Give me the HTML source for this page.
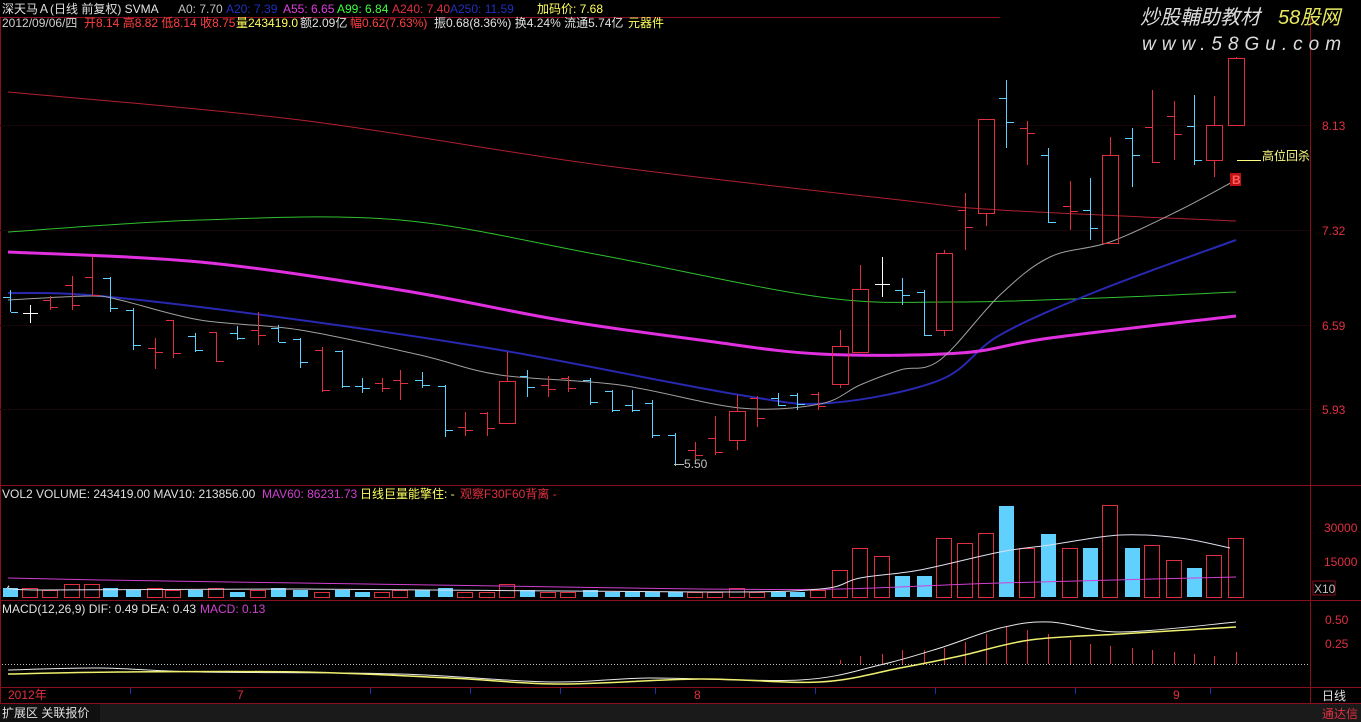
<!DOCTYPE html>
<html><head><meta charset="utf-8">
<style>
html,body{margin:0;padding:0;background:#000;width:1361px;height:722px;overflow:hidden}
svg{display:block}
text{font-family:"Liberation Sans","Noto Sans CJK SC",sans-serif;font-size:12px}
</style></head><body>
<svg id="s" width="1361" height="722" xmlns="http://www.w3.org/2000/svg">
<rect width="1361" height="722" fill="#000"/>
<g stroke="#8a1020" stroke-width="1" fill="none">
<line x1="0" y1="17.5" x2="1000" y2="17.5"/>
<line x1="1310.5" y1="18" x2="1310.5" y2="703"/>
<line x1="0" y1="485.5" x2="1361" y2="485.5"/>
<line x1="0" y1="600.5" x2="1361" y2="600.5"/>
<line x1="0" y1="687.5" x2="1361" y2="687.5"/>
<line x1="0" y1="703.5" x2="1361" y2="703.5"/>
<line x1="0.5" y1="18" x2="0.5" y2="703"/>
</g>
<g id="main"></g>
<text x="2" y="13" fill="#e0e0e0">深天马Ａ(日线 前复权) SVMA</text>
<text x="178" y="13" fill="#c0c0c0">A0: 7.70</text>
<text x="226" y="13" fill="#2030c0">A20: 7.39</text>
<text x="283" y="13" fill="#e040e0">A55: 6.65</text>
<text x="337" y="13" fill="#40ff40">A99: 6.84</text>
<text x="392" y="13" fill="#e03040">A240: 7.40</text>
<text x="450" y="13" fill="#2030c0">A250: 11.59</text>
<text x="537" y="13" fill="#ffff60">加码价: 7.68</text>
<g style="font-size:11.5px">
<text x="2" y="27" fill="#d0d0d0">2012/09/06/四</text>
<text x="84" y="27" fill="#ff4040">开8.14 高8.82 低8.14 收8.75</text>
<text x="236" y="27" fill="#ffff60">量243419.0</text>
<text x="300" y="27" fill="#e0e0e0">额2.09亿</text>
<text x="350" y="27" fill="#ff4040">幅0.62(7.63%)</text>
<text x="434" y="27" fill="#e0e0e0">振0.68(8.36%) 换4.24% 流通5.74亿</text>
<text x="628" y="27" fill="#ffff60">元器件</text>
</g>
<text x="1140" y="24" fill="#dcdcdc" style="font-size:20px;font-style:italic">炒股輔助教材</text>
<text x="1278" y="24" fill="#e8e860" style="font-size:20px;font-style:italic">58股网</text>
<text x="1142" y="50" fill="#dcdcdc" style="font-size:19px;font-style:italic;letter-spacing:6px">www.58Gu.com</text>
<g fill="#e03040">
<text x="1322" y="130">8.13</text>
<text x="1322" y="235">7.32</text>
<text x="1322" y="330">6.59</text>
<text x="1322" y="414">5.93</text>
<text x="1324" y="532">30000</text>
<text x="1324" y="566">15000</text>
<text x="1325" y="624">0.50</text>
<text x="1325" y="648">0.25</text>
</g>
<rect x="1313" y="581" width="22" height="14" fill="none" stroke="#8a1020"/>
<text x="1314" y="593" fill="#c0c0c0">X10</text>
<text x="2" y="498" fill="#e0e0e0">VOL2 VOLUME: 243419.00 MAV10: 213856.00</text>
<text x="262" y="498" fill="#d040d0">MAV60: 86231.73</text>
<text x="360" y="498" fill="#ffff60">日线巨量能擎住: -</text>
<text x="460" y="498" fill="#e03040">观察F30F60背离 -</text>
<text x="2" y="613" fill="#e0e0e0">MACD(12,26,9) DIF: 0.49 DEA: 0.43</text>
<text x="200" y="613" fill="#d040d0">MACD: 0.13</text>
<text x="8" y="699" fill="#e03040">2012年</text>
<text x="237" y="699" fill="#e03040">7</text>
<text x="694" y="699" fill="#e03040">8</text>
<text x="1173" y="699" fill="#e03040">9</text>
<text x="1322" y="700" fill="#e0e0e0">日线</text>
<rect x="0" y="704" width="1361" height="18" fill="#1a1a1a"/>
<rect x="0" y="704" width="100" height="18" fill="#101010"/>
<text x="2" y="717" fill="#e0e0e0">扩展区 关联报价</text>
<text x="1322" y="718" fill="#e03040">通达信</text>
<text x="1262" y="160" fill="#ffff80">高位回杀</text>
<line x1="1237" y1="160.5" x2="1261" y2="160.5" stroke="#ffff80"/>
<rect x="1230" y="173" width="11" height="13" fill="#c01010"/>
<text x="1232" y="184" fill="#ff6060" style="font-weight:bold">B</text>
<text x="684" y="468" fill="#c0c0c0">5.50</text>
<line x1="674" y1="464.5" x2="684" y2="464.5" stroke="#c0c0c0"/>
</svg>
<script>
var NS="http://www.w3.org/2000/svg",g=document.getElementById('main');
function el(n,a){var e=document.createElementNS(NS,n);for(var k in a)e.setAttribute(k,a[k]);g.appendChild(e);return e}
function pl(s,c,w){var p=s.split(' ').map(function(q){return q.split(',').map(Number)});
 var d='M'+p[0][0]+','+p[0][1];
 for(var i=0;i<p.length-1;i++){var p0=p[i-1]||p[i],p1=p[i],p2=p[i+1],p3=p[i+2]||p2;
  d+=' C'+(p1[0]+(p2[0]-p0[0])/6)+','+(p1[1]+(p2[1]-p0[1])/6)+' '+(p2[0]-(p3[0]-p1[0])/6)+','+(p2[1]-(p3[1]-p1[1])/6)+' '+p2[0]+','+p2[1];}
 el('path',{d:d,fill:'none',stroke:c,'stroke-width':w||1});}
[125,230,325,409].forEach(function(y){el('line',{x1:0,x2:1310,y1:y+.5,y2:y+.5,stroke:'#1a0508'})});
pl("8,92 300,120 600,165 900,200 1000,210 1236,221","#b02030",1);
pl("8,232 200,220 400,220 600,255 820,297 950,302 1100,298 1236,292","#30c030",1);
pl("8,293 100,296 300,320 500,350 740,395 830,403 940,380 1000,335 1100,290 1236,240","#2828b0",2);
pl("8,252 200,262 400,290 560,320 700,340 820,354 960,353 1050,338 1236,316","#e030e0",3);
pl("8,300 90,296 120,300 200,320 300,330 420,355 500,375 620,385 740,408 820,404 860,385 900,370 940,360 1000,295 1050,257 1110,242 1180,210 1236,180","#a0a0a0",1);
var C=[[10,297,312,290,312,'c'],[30,313,313,305,323,'w'],[50,300,307,296,310,'r'],[72,285,305,276,310,'r'],[92,277,295,256,296,'r'],[110,278,308,277,312,'c'],[133,310,345,308,350,'c'],[155,348,352,338,369,'r'],[173,320,353,320,358,'r'],[195,336,350,333,352,'c'],[216,332,361,332,362,'r'],[237,333,338,326,340,'c'],[258,330,335,312,345,'r'],[278,328,342,325,342,'c'],[300,339,362,338,368,'c'],[322,350,390,347,392,'r'],[342,351,386,350,388,'c'],[362,386,388,378,393,'c'],[382,383,388,378,392,'r'],[400,380,383,370,400,'r'],[422,380,385,372,388,'c'],[445,386,430,385,437,'c'],[465,427,430,412,436,'r'],[487,413,428,412,436,'r'],[507,381,423,352,423,'R'],[527,376,387,370,397,'c'],[548,385,389,376,397,'r'],[568,378,388,376,392,'r'],[590,380,402,378,405,'c'],[612,391,410,390,412,'c'],[632,405,410,390,412,'c'],[652,403,435,400,438,'c'],[675,435,464,433,466,'c'],[695,450,455,442,459,'r'],[715,438,452,416,455,'r'],[737,411,440,395,450,'R'],[757,398,418,396,427,'r'],[778,398,405,393,406,'c'],[797,395,404,393,410,'c'],[818,394,406,392,410,'r'],[840,346,384,330,388,'R'],[860,289,352,265,352,'R'],[882,284,284,257,297,'w'],[902,290,295,278,305,'c'],[924,292,335,290,336,'c'],[944,253,330,250,336,'R'],[965,210,227,193,250,'r'],[986,119,213,119,226,'R'],[1006,98,122,80,148,'c'],[1027,128,133,121,165,'r'],[1048,155,222,148,223,'c'],[1070,206,211,181,230,'r'],[1090,210,228,178,240,'c'],[1110,155,243,137,243,'R'],[1132,138,155,128,187,'c'],[1152,127,162,90,163,'r'],[1174,116,134,101,160,'r'],[1194,126,160,95,165,'c'],[1214,125,160,96,177,'R'],[1236,58,125,57,125,'R']];
C.forEach(function(c){var x=c[0],t=c[5];
 if(t=='R'){el('line',{x1:x+.5,x2:x+.5,y1:c[3],y2:c[1],stroke:'#e03040'});el('line',{x1:x+.5,x2:x+.5,y1:c[2],y2:c[4],stroke:'#e03040'});el('rect',{x:x-7.5,y:c[1]+.5,width:16,height:c[2]-c[1],fill:'none',stroke:'#e03040'});}
 else{var col=t=='r'?'#e03040':(t=='c'?'#60d0ff':'#ffffff');
  el('line',{x1:x+.5,x2:x+.5,y1:c[3],y2:c[4],stroke:col});
  el('line',{x1:x-7,x2:x,y1:c[1]+.5,y2:c[1]+.5,stroke:col});
  el('line',{x1:x+1,x2:x+8,y1:c[2]+.5,y2:c[2]+.5,stroke:col});}
});
var V=[588,588,590,584,584,588,590,588,590,590,588,592,590,588,590,592,590,592,592,590,590,588,592,592,584,590,592,592,590,592,592,592,592,592,592,588,592,592,592,590,570,548,556,576,576,538,543,533,506,548,534,548,548,505,548,545,560,568,555,538];
C.forEach(function(c,i){var x=c[0],t=c[5],top=V[i];
 if(t=='c')el('rect',{x:x-7,y:top,width:15,height:597-top,fill:'#60d0ff'});
 else el('rect',{x:x-7.5,y:top+.5,width:15,height:597-top,fill:'none',stroke:'#e03040'});});
pl("8,578 100,580 300,583 500,586 700,589 840,589 1000,583 1236,577","#d040d0",1);
pl("8,586 40,590 300,589 700,592 820,589 860,578 920,570 1000,552 1050,545 1120,535 1180,538 1230,548","#e0e0f0",1);
for(var x=2;x<1308;x+=3)el('rect',{x:x,y:664,width:1,height:1,fill:'#c0c0c0'});
C.forEach(function(c,i){if(i>=40){var h=[4,8,10,14,14,16,22,30,38,34,30,24,20,18,16,14,12,10,8,12][i-40];el('line',{x1:c[0]+.5,x2:c[0]+.5,y1:664,y2:664-h,stroke:'#e03040'});}});
pl("8,670 100,668 200,672 400,674 550,682 650,678 800,680 880,665 940,648 1000,628 1050,622 1120,632 1236,622","#e8e8e8",1);
pl("8,674 120,672 300,672 450,678 560,684 700,679 820,682 900,668 960,656 1030,640 1120,634 1236,627","#f0f070",1.5);
[130,370,470,560,655,815,935,1075,1210].forEach(function(x){el('line',{x1:x+.5,x2:x+.5,y1:688,y2:694,stroke:'#2030a0'})});
</script>
</body></html>
